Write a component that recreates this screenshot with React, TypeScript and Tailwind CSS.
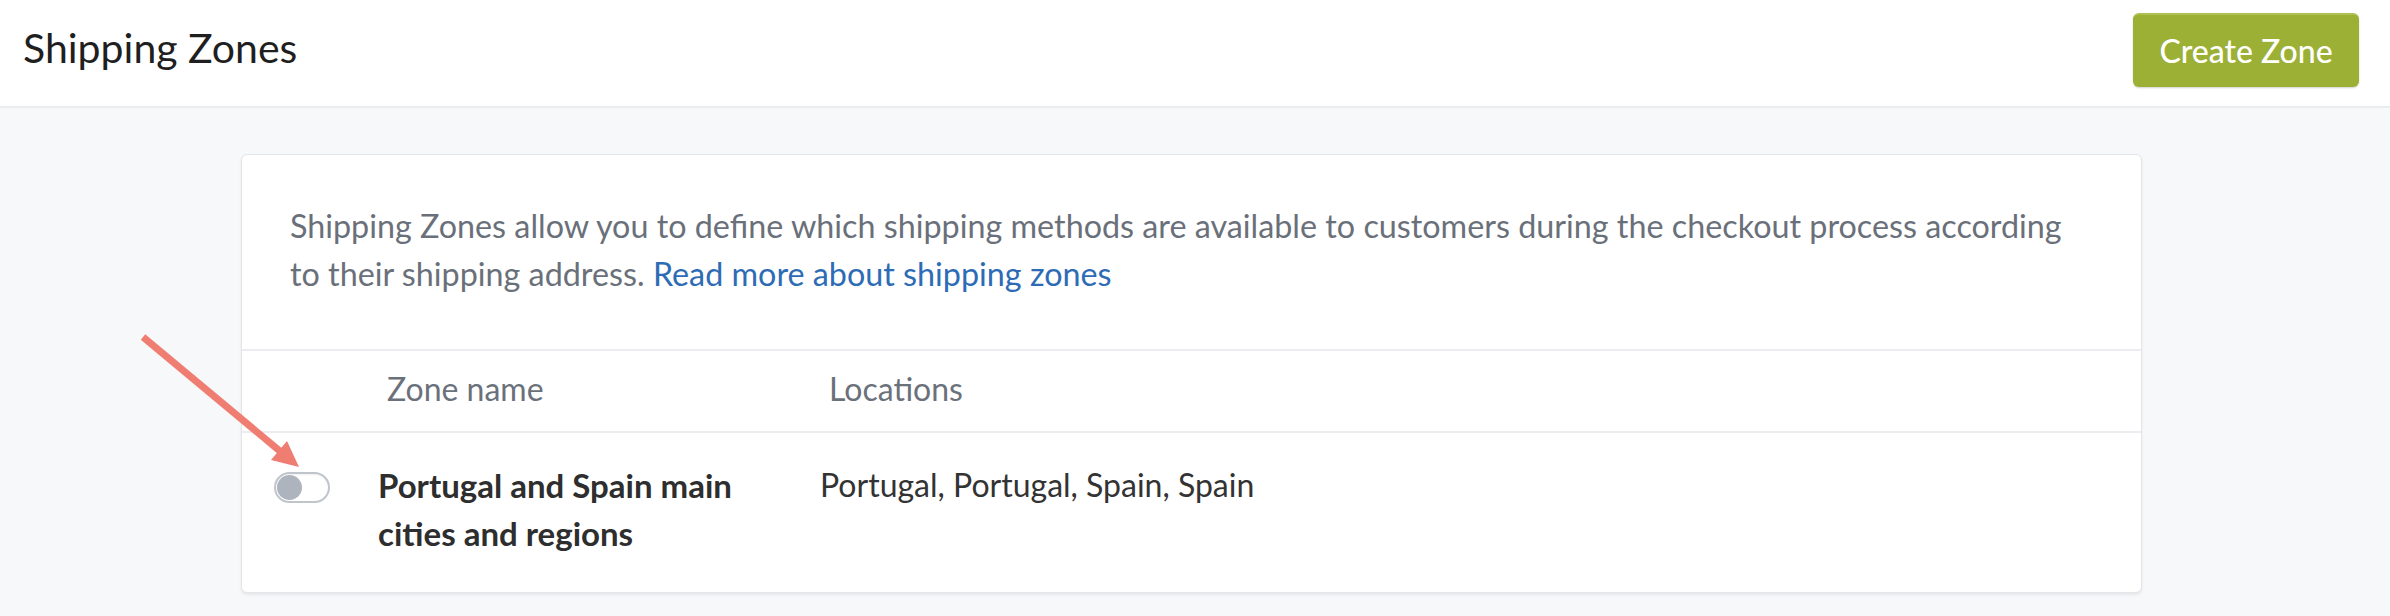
const zones = [
  {
    name: ['Portugal and Spain main', 'cities and regions'],
    locations: 'Portugal, Portugal, Spain, Spain',
    enabled: false,
  },
];

function Toggle({ on }: { on: boolean }) {
  return (
    <button
      type="button"
      aria-pressed={on}
      className="mt-[11px] flex h-[31px] w-[56px] shrink-0 items-center rounded-full border-2 border-[#c0c5cc] bg-white p-[1px] shadow-[inset_0_1px_2px_rgba(0,0,0,0.06)]"
    >
      <span className="h-[25px] w-[25px] rounded-full bg-[#adb4bd]" />
    </button>
  );
}

export default function App() {
  return (
    <div className="relative min-h-[616px] bg-[#f7f8fa] font-['Lato',sans-serif]">
      <header className="flex h-[108px] items-center justify-between border-b-2 border-[#eaecf0] bg-white pl-[23px] pr-[31px]">
        <h1 className="pb-[11px] text-[41px] leading-[40px] text-[#1f1f1f]">Shipping Zones</h1>
        <button
          type="button"
          className="mb-[6px] h-[74px] w-[226px] rounded-[6px] border-t-2 border-[#aec04f] bg-[#9cb035] text-[32px] font-medium text-white shadow-[0_1px_2px_rgba(0,0,0,0.18)]"
        >
          Create Zone
        </button>
      </header>

      <main className="pt-[46px]">
        <section className="ml-[241px] w-[1901px] rounded-[6px] border border-[#e3e5e9] bg-white shadow-[0_2px_3px_rgba(0,0,0,0.07)]">
          <p className="px-[48px] pt-[47px] pb-[51px] text-[32.3px] leading-[48px] text-[#6a707a]">
            Shipping Zones allow you to define which shipping methods are available to customers during the checkout process according
            <br />
            to their shipping address.{' '}
            <a href="#" className="text-[#2d6cb5]">
              Read more about shipping zones
            </a>
          </p>

          {/* cabecera de la tabla */}
          <div className="flex border-t-2 border-[#ececf1] pt-[14px] pb-[18px] text-[32px] leading-[48px] text-[#6b717b]">
            <div className="w-[136px] shrink-0" />
            <div className="w-[442px] shrink-0 pl-[9px]">Zone name</div>
            <div className="pl-[9px]">Locations</div>
          </div>

          {zones.map((z, idx) => (
            <div
              key={idx}
              className="flex items-start border-t-2 border-[#ececf1] pt-[28px] pb-[35px] text-[32px] leading-[48px] text-[#333]"
            >
              <div className="flex w-[136px] shrink-0 pl-[32px]">
                <Toggle on={z.enabled} />
              </div>
              <div className="w-[442px] shrink-0 text-[33px] font-bold text-[#2e2e2e]">
                {z.name[0]}
                <br />
                {z.name[1]}
              </div>
              <div>{z.locations}</div>
            </div>
          ))}
        </section>
      </main>

      {/* flecha de anotación */}
      <svg
        className="pointer-events-none absolute left-0 top-0"
        width="2390"
        height="616"
        viewBox="0 0 2390 616"
      >
        <line x1="143" y1="337" x2="281" y2="452" stroke="#f07d72" strokeWidth="7" />
        <polygon points="299,467 271,460 287,441" fill="#f07d72" />
      </svg>
    </div>
  );
}
